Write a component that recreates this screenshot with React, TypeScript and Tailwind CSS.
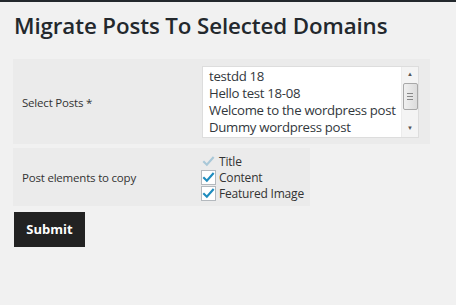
import React from 'react';

const posts = ['testdd 18', 'Hello test 18-08', 'Welcome to the wordpress post', 'Dummy wordpress post'];

const Check = ({ muted }: { muted?: boolean }) => (
    <svg viewBox="0 0 16 16" className="w-[13px] h-[13px]">
        <path d="M2.5 8.5 L6 12 L13.5 3.5" fill="none" stroke={muted ? '#a9c8d8' : '#1e8cbe'} strokeWidth="2.6" strokeLinecap="square" />
    </svg>
);

const Option = ({ label, checked, disabled }: { label: string; checked?: boolean; disabled?: boolean }) => (
    <label className="flex items-center gap-[3px] h-[16px] text-[12px] text-[#333] whitespace-nowrap tracking-[-0.2px]">
        <span className={`w-[15px] h-[15px] shrink-0 flex items-center justify-center ${disabled ? '' : 'border border-[#b4b9be] bg-white'}`}>
            {checked && <Check muted={disabled} />}
        </span>
        {label}
    </label>
);

export default function App() {
    return (
        <div className="min-h-[305px] bg-[#f1f1f1] border-t-2 border-[#23282d] text-[#333]" style={{ fontFamily: '"Open Sans", "Noto Sans", sans-serif' }}>
            <div className="pl-[13px] pt-[9px]">
                <h1 className="text-[22.3px] font-semibold text-[#23282d] leading-[30px] pl-[1px] tracking-[-0.1px] whitespace-nowrap">Migrate Posts To Selected Domains</h1>

                <div className="mt-[18px] w-[417px] h-[85px] bg-[#ebebeb] flex items-center">
                    <div className="w-[189px] pl-[9px] pt-[3px] text-[11.5px] tracking-[-0.2px] whitespace-nowrap">Select Posts *</div>
                    <div className="w-[217px] h-[72px] bg-white border border-[#dddddd] flex">
                        <div className="flex-1 pl-[6px] pt-[1px] text-[13.2px] leading-[17px] text-[#32373c] tracking-[-0.3px]">
                            {posts.map((p) => (
                                <div key={p} className="whitespace-nowrap">{p}</div>
                            ))}
                        </div>
                        <div className="w-[17px] flex flex-col items-center bg-[#f4f4f4] border-l border-[#ececec]">
                            <div className="h-[16px] flex items-center justify-center text-[6px] text-[#555]">▲</div>
                            <div className="w-[15px] h-[27px] rounded-[2px] border border-[#a8a8a8] bg-gradient-to-r from-[#f0f0f0] to-[#dcdcdc] flex flex-col items-center justify-center gap-[2px]">
                                <span className="w-[6px] h-px bg-[#888]" />
                                <span className="w-[6px] h-px bg-[#888]" />
                                <span className="w-[6px] h-px bg-[#888]" />
                            </div>
                            <div className="flex-1" />
                            <div className="h-[16px] flex items-center justify-center text-[6px] text-[#555]">▼</div>
                        </div>
                    </div>
                </div>

                <div className="mt-[4px] w-[297px] h-[58px] bg-[#ebebeb] flex items-center">
                    <div className="w-[188px] pl-[9px] pt-[2px] text-[11.5px] tracking-[-0.2px] whitespace-nowrap">Post elements to copy</div>
                    <div className="flex flex-col pt-[1px]">
                        <Option label="Title" checked disabled />
                        <Option label="Content" checked />
                        <Option label="Featured Image" checked />
                    </div>
                </div>

                <button className="mt-[6px] ml-[1px] w-[71px] h-[35px] bg-[#222222] text-white text-[13px] font-bold">Submit</button>
            </div>
        </div>
    );
}
